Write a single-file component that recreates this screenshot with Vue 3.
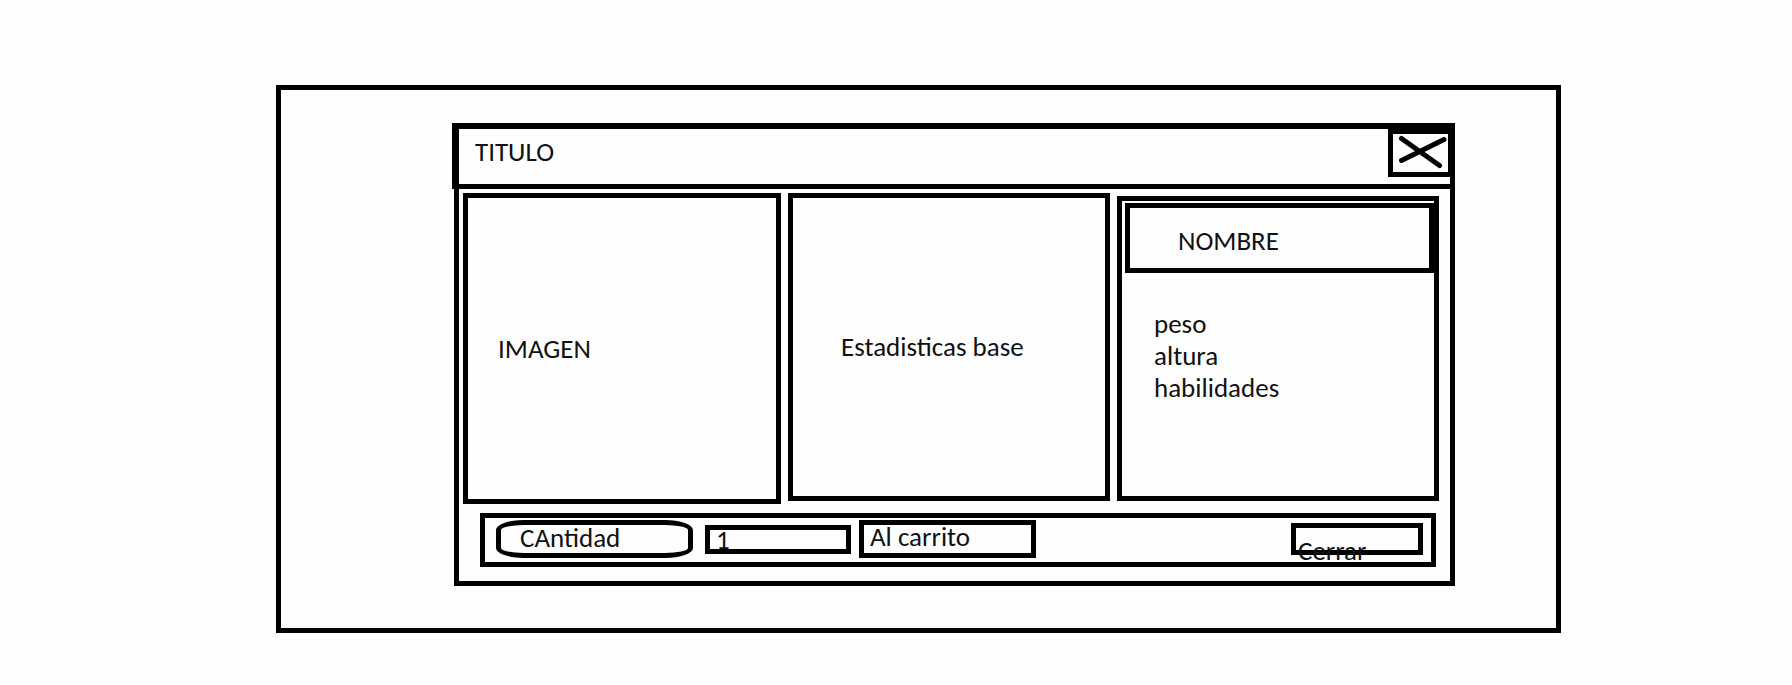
<script setup>
import { ref } from 'vue'

const quantity = ref('1')
const details = ['peso', 'altura', 'habilidades']
</script>

<template>
  <main class="page">
    <div class="frame">
      <section class="modal" role="dialog" aria-labelledby="modal-title">
        <header class="titlebar">
          <h1 id="modal-title" class="title">TITULO</h1>
          <button class="close" type="button" aria-label="Cerrar ventana">
            <svg viewBox="0 0 55 38" width="55" height="38" aria-hidden="true">
              <path d="M8.5 4.5 L46.5 31.5 M8.5 26.5 L51 5.5" />
            </svg>
          </button>
        </header>

        <div class="body">
          <div class="panels">
            <div class="panel image">IMAGEN</div>
            <div class="panel stats">Estadisticas base</div>
            <div class="panel info">
              <h2 class="name">NOMBRE</h2>
              <ul class="details">
                <li v-for="item in details" :key="item">{{ item }}</li>
              </ul>
            </div>
          </div>

          <footer class="actions">
            <label class="quantity-label" for="quantity">CAntidad</label>
            <input id="quantity" v-model="quantity" class="quantity" type="text" inputmode="numeric" />
            <button class="add" type="button">Al carrito</button>
            <button class="dismiss" type="button">Cerrar</button>
          </footer>
        </div>
      </section>
    </div>
  </main>
</template>

<style>
body {
  background: #fefefe;
}
</style>

<style scoped>
.page,
.page * {
  box-sizing: border-box;
}

.page {
  padding: 85px 231px 51px 276px;
  color: #111;
  font-family: Carlito, Calibri, Lato, "Open Sans", sans-serif;
  font-size: 27px;
  line-height: 32px;
}

.frame {
  padding: 33px 101px 42px 171px;
  border: 5px solid #000;
}

.titlebar {
  display: flex;
  align-items: flex-start;
  justify-content: space-between;
  min-height: 66px;
  border: solid #000;
  border-width: 6px 5px 5px 7px;
}

.title,
.name {
  margin: 0;
  font-size: inherit;
  font-weight: 400;
}

.title {
  padding: 7px 16px;
}

button,
input {
  margin: 0;
  border: 5px solid #000;
  border-radius: 0;
  background: transparent;
  color: inherit;
  font: inherit;
  text-align: left;
}

.close {
  padding: 0;
  border-right-width: 2px;
}

.close svg {
  display: block;
  fill: none;
  stroke: #000;
  stroke-width: 5;
  stroke-linecap: round;
}

.body {
  margin-left: 2px;
  padding: 4px 11px 14px 4px;
  border: 5px solid #000;
  border-top: 0;
}

.panels {
  display: grid;
  grid-template-columns: 318fr 322fr 322fr;
  align-items: start;
  gap: 7px;
}

.panel {
  border: 5px solid #000;
}

.image {
  display: flex;
  align-items: center;
  min-height: 311px;
  padding-left: 30px;
}

.stats {
  display: flex;
  align-items: center;
  min-height: 308px;
  padding-left: 48px;
}

.info {
  min-height: 305px;
  margin-top: 3px;
  padding: 2px 0 0 3px;
}

.name {
  padding: 17px 48px 11px;
  border: 5px solid #000;
}

.details {
  margin: 0;
  padding: 35px 29px 0;
  list-style: none;
}

.actions {
  display: flex;
  align-items: center;
  margin: 9px 3px 0 17px;
  padding: 2px 8px 4px 11px;
  border: 5px solid #000;
}

.quantity-label {
  width: 197px;
  height: 38px;
  padding-left: 19px;
  border: 5px solid #000;
  border-radius: 28px / 10px;
  line-height: 26px;
}

.quantity {
  width: 146px;
  height: 29px;
  margin-left: 12px;
  padding: 2px 6px 0;
}

.add {
  width: 177px;
  height: 38px;
  margin-left: 8px;
  padding: 0 6px 4px;
  line-height: 24px;
}

.dismiss {
  display: flex;
  align-items: flex-start;
  width: 132px;
  height: 32px;
  margin-left: auto;
  padding: 11px 2px 0;
  line-height: 24px;
}
</style>
